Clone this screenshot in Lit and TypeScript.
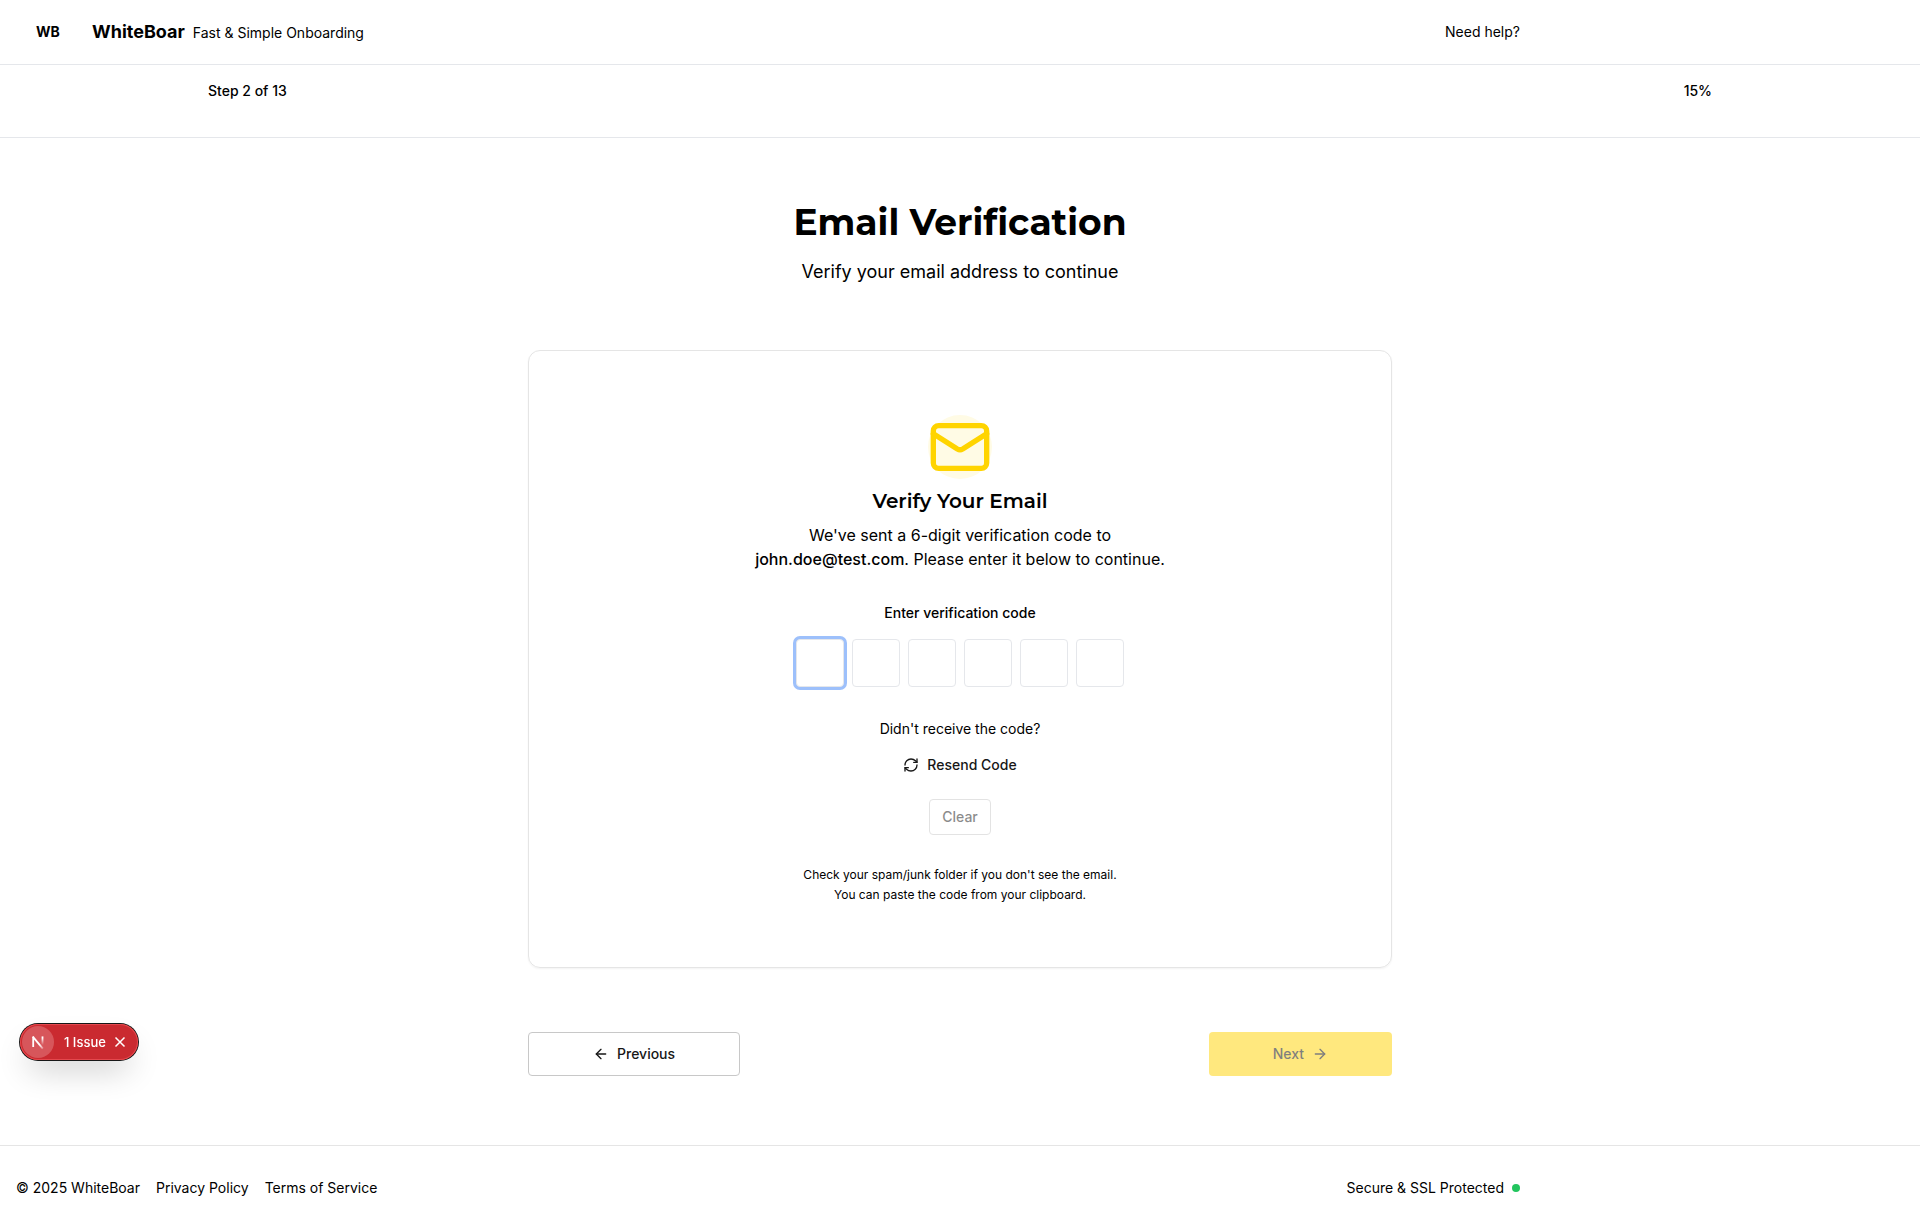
import { LitElement, html, css } from "lit";
import { customElement, state } from "lit/decorators.js";

@customElement("app-root")
export class AppRoot extends LitElement {
  static styles = css`
    :host {
      display: block;
      font-family: Inter, "Liberation Sans", sans-serif;
      font-size: 14px;
      line-height: 20px;
      color: #000;
      background: #fff;
    }
    *, *::before, *::after { box-sizing: border-box; }
    h1, h2, p { margin: 0; }
    a { color: inherit; text-decoration: none; }
    button, input { font: inherit; color: inherit; }
    svg {
      display: block;
      overflow: visible;
      fill: none;
      stroke: currentColor;
      stroke-width: 2;
      stroke-linecap: round;
      stroke-linejoin: round;
    }
    .page { display: flex; flex-direction: column; min-height: 100vh; }
    .container {
      display: flex;
      align-items: center;
      justify-content: space-between;
      width: 100%;
      max-width: 1536px;
      padding: 0 16px;
    }
    .header { border-bottom: 1px solid #e5e7eb; }
    .header .container { height: 64px; }
    .brand { display: flex; align-items: center; gap: 12px; }
    .mark { width: 64px; text-align: center; font-weight: 700; }
    .names { display: flex; align-items: baseline; gap: 8px; }
    .name { font-size: 18px; line-height: 28px; font-weight: 700; }
    .progress { border-bottom: 1px solid #e5e7eb; font-weight: 500; }
    .progress .container { margin: 0 auto; padding: 16px 16px 36px; }
    .main {
      flex: 1;
      width: 100%;
      max-width: 896px;
      margin: 0 auto;
      padding: 64px 16px;
    }
    .intro { text-align: center; margin-bottom: 64px; }
    .title {
      font-family: Montserrat, Inter, sans-serif;
      font-size: 36px;
      line-height: 40px;
      font-weight: 700;
      margin-bottom: 16px;
    }
    .subtitle { font-size: 18px; line-height: 28px; }
    .card {
      display: flex;
      flex-direction: column;
      align-items: center;
      padding: 64px;
      border: 1px solid #e5e5e5;
      border-radius: 12px;
      box-shadow: 0 1px 2px rgba(0, 0, 0, 0.05);
      text-align: center;
    }
    .mail {
      border-radius: 50%;
      color: #ffd400;
      background: #fffbe5;
      margin-bottom: 8px;
    }
    .heading {
      font-family: Montserrat, Inter, sans-serif;
      font-size: 20px;
      line-height: 28px;
      font-weight: 600;
      margin-bottom: 8px;
    }
    .lead { max-width: 448px; font-size: 16px; line-height: 24px; margin-bottom: 32px; }
    .lead strong { font-weight: 500; }
    .label { font-weight: 500; margin-bottom: 16px; }
    .digits { display: flex; gap: 8px; margin-bottom: 32px; }
    .digit {
      width: 48px;
      height: 48px;
      padding: 0;
      text-align: center;
      font-size: 18px;
      background: #fff;
      border: 1px solid #e5e7eb;
      border-radius: 4px;
      outline: none;
    }
    .digit.active { box-shadow: 0 0 0 3px #9dc0fb; }
    .btn {
      display: inline-flex;
      align-items: center;
      justify-content: center;
      gap: 8px;
      height: 36px;
      padding: 0 12px;
      border: 0;
      border-radius: 4px;
      background: transparent;
      color: #171717;
      font-weight: 500;
      cursor: pointer;
    }
    .btn:disabled { opacity: 0.5; cursor: default; }
    .resend { margin: 8px 0 16px; }
    .clear { border: 1px solid #c8c8c8; margin-bottom: 32px; }
    .hints { display: grid; gap: 4px; font-size: 12px; line-height: 16px; }
    .actions { display: flex; justify-content: space-between; margin-top: 64px; }
    .actions .btn { height: 44px; padding: 0 64px; }
    .previous { border: 1px solid #c8c8c8; }
    .actions .next { background: #ffd200; color: #000; }
    .footer { border-top: 1px solid #e5e5e5; }
    .footer .container { padding: 32px 16px; }
    .links { display: flex; gap: 16px; }
    .secure { display: flex; align-items: center; gap: 8px; }
    .dot { width: 8px; height: 8px; border-radius: 50%; background: #22c55e; }
    .badge {
      position: fixed;
      left: 20px;
      bottom: 170px;
      display: flex;
      align-items: center;
      height: 36px;
      padding: 2px;
      border-radius: 18px;
      color: #fff;
      background: #ca2a30;
      font-size: 13px;
      box-shadow: 0 0 0 1px #171717, inset 0 0 0 1px #e5484d,
        0 16px 32px -8px rgba(0, 0, 0, 0.24);
    }
    .badge button {
      display: flex;
      align-items: center;
      padding: 0;
      border: 0;
      background: transparent;
      color: #fff;
      font-weight: 500;
      cursor: pointer;
    }
    .badge .logo {
      justify-content: center;
      width: 32px;
      height: 32px;
      border-radius: 50%;
      background: #d7565b;
    }
    .badge .issue { margin: 0 8px 0 10px; }
    .badge .close { margin-right: 10px; }
  `;

  @state() private code: string[] = Array(6).fill("");
  @state() private active = 0;

  private onInput(index: number, event: Event) {
    const value = (event.target as HTMLInputElement).value;
    this.code = this.code.map((d, i) => (i === index ? value : d));
    if (value && index < 5) {
      this.renderRoot.querySelector<HTMLInputElement>(`#digit-${index + 1}`)?.focus();
    }
  }

  private clear() {
    this.code = Array(6).fill("");
    this.active = 0;
  }

  render() {
    return html`
      <div class="page">
        <header class="header">
          <div class="container">
            <div class="brand">
              <span class="mark">WB</span>
              <div class="names">
                <span class="name">WhiteBoar</span>
                <span>Fast &amp; Simple Onboarding</span>
              </div>
            </div>
            <a href="#help">Need help?</a>
          </div>
        </header>
        <div class="progress">
          <div class="container"><span>Step 2 of 13</span><span>15%</span></div>
        </div>
        <main class="main">
          <div class="intro">
            <h1 class="title">Email Verification</h1>
            <p class="subtitle">Verify your email address to continue</p>
          </div>
          <section class="card">
            <svg class="mail" width="64" height="64" viewBox="0 0 24 24" aria-hidden="true">
              <path d="m22 7-8.991 5.727a2 2 0 0 1-2.009 0L2 7" />
              <rect x="2" y="4" width="20" height="16" rx="2" />
            </svg>
            <h2 class="heading">Verify Your Email</h2>
            <p class="lead">
              We've sent a 6-digit verification code to
              <strong>john.doe@test.com</strong>. Please enter it below to continue.
            </p>
            <label class="label" for="digit-0">Enter verification code</label>
            <div class="digits">
              ${this.code.map(
                (digit, i) => html`<input
                  id="digit-${i}"
                  class="digit ${i === this.active ? "active" : ""}"
                  type="text"
                  inputmode="numeric"
                  maxlength="1"
                  aria-label="Digit ${i + 1}"
                  .value=${digit}
                  @focus=${() => (this.active = i)}
                  @input=${(e: Event) => this.onInput(i, e)}
                />`
              )}
            </div>
            <p>Didn't receive the code?</p>
            <button class="btn resend" type="button">
              <svg width="16" height="16" viewBox="0 0 24 24" aria-hidden="true">
                <path d="M3 12a9 9 0 0 1 9-9 9.75 9.75 0 0 1 6.74 2.74L21 8" />
                <path d="M21 3v5h-5" />
                <path d="M21 12a9 9 0 0 1-9 9 9.75 9.75 0 0 1-6.74-2.74L3 16" />
                <path d="M8 16H3v5" />
              </svg>
              Resend Code
            </button>
            <button
              class="btn clear"
              type="button"
              ?disabled=${this.code.every((d) => !d)}
              @click=${this.clear}
            >Clear</button>
            <div class="hints">
              <p>Check your spam/junk folder if you don't see the email.</p>
              <p>You can paste the code from your clipboard.</p>
            </div>
          </section>
          <div class="actions">
            <button class="btn previous" type="button">
              <svg width="16" height="16" viewBox="0 0 24 24" aria-hidden="true">
                <path d="m12 19-7-7 7-7" />
                <path d="M19 12H5" />
              </svg>
              Previous
            </button>
            <button class="btn next" type="button" ?disabled=${this.code.some((d) => !d)}>
              Next
              <svg width="16" height="16" viewBox="0 0 24 24" aria-hidden="true">
                <path d="M5 12h14" />
                <path d="m12 5 7 7-7 7" />
              </svg>
            </button>
          </div>
        </main>
        <footer class="footer">
          <div class="container">
            <div class="links">
              <span>© 2025 WhiteBoar</span>
              <a href="#privacy">Privacy Policy</a>
              <a href="#terms">Terms of Service</a>
            </div>
            <div class="secure"><span>Secure &amp; SSL Protected</span><span class="dot"></span></div>
          </div>
        </footer>
      </div>
      <div class="badge">
        <button class="logo" type="button" aria-label="Open dev tools">
          <svg width="14" height="14" viewBox="0 0 14 14" aria-hidden="true">
            <defs>
              <linearGradient id="fade-stem" x1="0" y1="3" x2="0" y2="10" gradientUnits="userSpaceOnUse">
                <stop offset="0" stop-color="#fff" />
                <stop offset="1" stop-color="#fff" stop-opacity="0" />
              </linearGradient>
              <linearGradient id="fade-leg" x1="9" y1="9" x2="13" y2="14" gradientUnits="userSpaceOnUse">
                <stop offset="0" stop-color="#fff" />
                <stop offset="1" stop-color="#fff" stop-opacity="0.2" />
              </linearGradient>
            </defs>
            <path d="M2.2 12V1.6" stroke-width="1.8" stroke-linecap="butt" />
            <path d="M1.8 1.6 11.8 13.6" stroke="url(#fade-leg)" stroke-width="1.8" stroke-linecap="butt" />
            <rect x="10.6" y="1.4" width="1.8" height="8.6" fill="url(#fade-stem)" stroke="none" />
          </svg>
        </button>
        <button class="issue" type="button">1 Issue</button>
        <button class="close" type="button" aria-label="Dismiss">
          <svg width="12" height="12" viewBox="0 0 12 12" aria-hidden="true">
            <path d="m1.5 1.5 9 9M10.5 1.5l-9 9" stroke-width="1.5" stroke-linecap="butt" />
          </svg>
        </button>
      </div>
    `;
  }
}
